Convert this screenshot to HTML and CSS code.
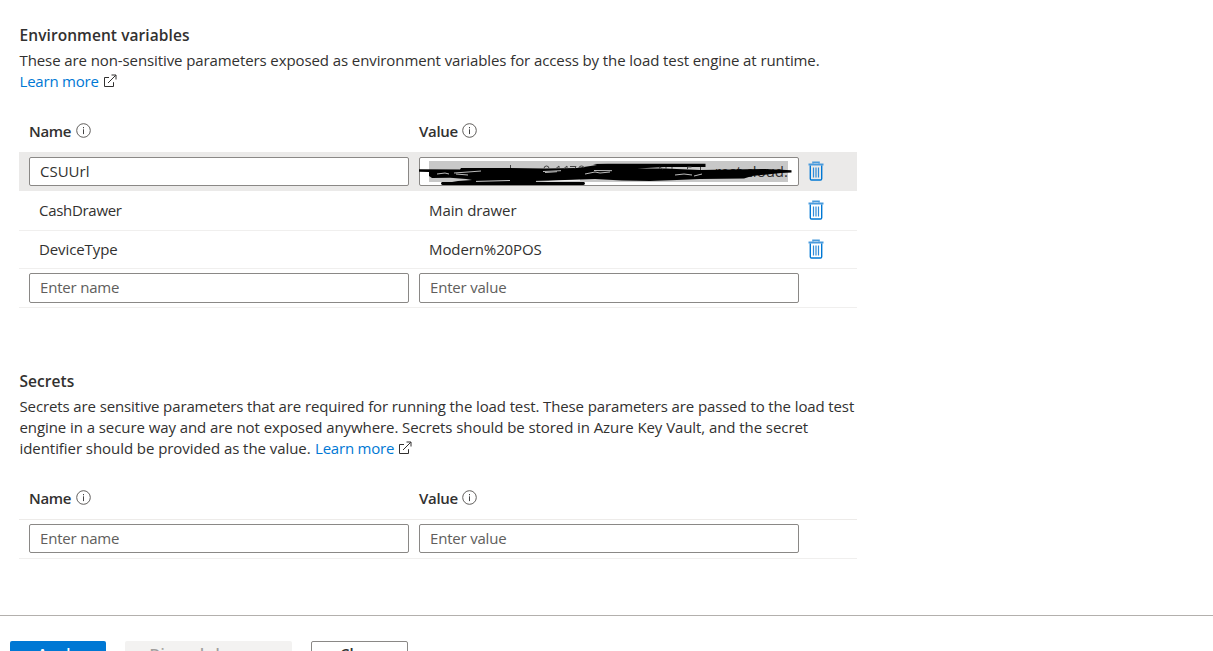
FILE: index.html
```html
<!DOCTYPE html>
<html lang="en">
<head>
<meta charset="utf-8">
<title>Load test parameters</title>
<link rel="stylesheet" href="styles.css">
</head>
<body>
<svg class="defs" width="0" height="0">
  <symbol id="info" viewBox="0 0 15 15"><circle cx="7.5" cy="7.5" r="6.8" fill="none" stroke="#605e5c"/><path d="M7.5 6.3v4.8M7.5 4v1.3" stroke="#444" fill="none"/></symbol>
  <symbol id="open" viewBox="0 0 14 14"><path d="M6 3.5H1.5v9h9V8.2M5 9l7.7-7.7M8.5 1h4.500v4.500" fill="none" stroke="#323130" stroke-width="1"/></symbol>
  <symbol id="trash" viewBox="0 0 16 20"><path d="M5 2.500V1.200h6v1.300" fill="none" stroke="#4a9bdc" stroke-width="1.6"/><path d="M.5 3.500h15" stroke="#4a9bdc" stroke-width="2"/><path d="M2.300 4.500v13.200q0 1.300 1.200 1.300h9q1.200 0 1.200-1.300V4.500" fill="none" stroke="#0078d4" stroke-width="1.4"/><path d="M5.500 6.500v10M8 6.500v10M10.500 6.500v10" stroke="#2f8bd8" stroke-width="1.2"/></symbol>
</svg>
<main class="page">
  <section class="env">
    <h2>Environment variables</h2>
    <p><span class="line l1">These are non-sensitive parameters exposed as environment variables for access by the load test engine at runtime.</span>
    <span class="line"><a class="more">Learn more</a><svg class="open"><use href="#open"/></svg></span></p>
    <div class="head"><div class="col"><b class="hn">Name</b><svg class="info"><use href="#info"/></svg></div><div class="col"><b class="hv">Value</b><svg class="info"><use href="#info"/></svg></div></div>
    <div class="row selected">
      <div class="box"><span class="t-csu">CSUUrl</span></div>
      <div class="box value"><div class="selection"><span>rest cloud.</span></div>
        <svg class="scribble" viewBox="410 145 400 50">
          <path d="M419 169.300L460 169.500L461 168H510L545 168.500L577 168L597 165L593 164L608 163.800H705.500V167L665 167L637 168.500L665 168.500L700 170L730 169.500L765 169L791.500 170.300V172.500L781 173L767 174.500L752 176L744 178.500L700 179L677 180L650 181L622 180.500L595 179L565 180L548 181L535 182H533L440 184L458 181L472 180L466 179L450 177.700L432 178L429 176V172L419 171.800Z"/>
          <path d="M442.500 183.500H583.500" stroke="#000" stroke-width="2.800" stroke-linecap="round"/>
          <path d="M476 181.400L510 180.500M536 181.400L580 180.300" stroke="#fff" stroke-width=".8"/>
          <path d="M437 174l8-1 4 1M454 173l14-1 13-1M456 174l12 1M543 171.500l18-.8M545 172.500l12-.8M585 174l10-2 5 1 10-1M594 170.500l18 .2M675 175l9-1 8 1M694 176l8-2" fill="none" stroke="#bbb" stroke-width="1"/>
          <path d="M510.500 165v3M544 168.500q0-2.500 2.500-2.500t2.500 2.500M556 168.500l3-2.500v2.500M564 168.500l3-2.500v2.500M570 166.500h6l-1 2M579 168q0-2 2.500-2t2.500 2M659.500 169v-2l3 2M666 169v-2M672 169v-2M687.500 169v-2h4M700.500 167v3" fill="none" stroke="#444" stroke-width="1"/>
        </svg>
      </div>
      <svg class="trash"><use href="#trash"/></svg>
    </div>
    <div class="row r2"><div class="cell"><span class="t-cash">CashDrawer</span></div><div class="cell"><span class="t-main">Main drawer</span></div><svg class="trash"><use href="#trash"/></svg></div>
    <div class="row r3"><div class="cell"><span class="t-dev">DeviceType</span></div><div class="cell"><span class="t-pos">Modern%20POS</span></div><svg class="trash"><use href="#trash"/></svg></div>
    <div class="row r4"><div class="box hint"><span>Enter name</span></div><div class="box hint"><span>Enter value</span></div></div>
  </section>
  <section class="secrets">
    <h2 class="sec">Secrets</h2>
    <p><span class="line s1">Secrets are sensitive parameters that are required for running the load test. These parameters are passed to the load test</span>
    <span class="line s2">engine in a secure way and are not exposed anywhere. Secrets should be stored in Azure Key Vault, and the secret</span>
    <span class="line"><span class="s3">identifier should be provided as the value.</span><a class="more gap">Learn more</a><svg class="open"><use href="#open"/></svg></span></p>
    <div class="head head2"><div class="col"><b class="hn">Name</b><svg class="info"><use href="#info"/></svg></div><div class="col"><b class="hv">Value</b><svg class="info"><use href="#info"/></svg></div></div>
    <div class="row r5"><div class="box hint"><span>Enter name</span></div><div class="box hint"><span>Enter value</span></div></div>
  </section>
</main>
<footer><div class="btn apply">Apply</div><div class="btn discard">Discard changes</div><div class="btn close">Close</div></footer>
</body>
</html>
```
FILE: styles.css
```css
* { box-sizing: border-box; }
body { margin: 0; height: 651px; overflow: hidden; background: #fff; color: #323130; font: 15px/21px "Open Sans", "Noto Sans", sans-serif; display: flex; flex-direction: column; }
.defs { position: absolute; }
.page { height: 615px; flex: none; padding: 24px 0 0 19px; width: 857px; }
h2 { margin: 0 0 4px; padding-left: .5px; font-size: 15.5px; line-height: 22px; font-weight: 600; letter-spacing: .07px; }
p { margin: 0; padding-left: .5px; }
.line { display: flex; align-items: center; white-space: nowrap; height: 21px; }
.l1 { letter-spacing: -.097px; }
.s1 { letter-spacing: -.118px; }
.s2 { letter-spacing: -.076px; }
.s3 { letter-spacing: -.06px; width: 290.5px; }
.more { color: #0078d4; width: 79px; letter-spacing: -.2px; }
.gap { margin-left: 5px; }
.open { width: 14px; height: 14px; margin: 0 0 1px 4px; }
.head { display: flex; height: 60px; padding: 29px 0 0 10px; }
.head2 { border-bottom: 1px solid #edebe9; height: 61px; }
.col { width: 390px; display: flex; height: 21px; align-items: center; }
.col b { font-weight: 600; font-size: 15px; letter-spacing: -.3px; }
.hn { width: 43px; }
.hv { width: 39px; }
.info { width: 15px; height: 15px; margin: 0 0 2px 4px; }
.row { display: flex; width: 838px; padding-left: 10px; gap: 10px; align-items: center; border-bottom: 1px solid #f0efee; }
.selected { height: 39px; background: #ebeae9; border: 0; }
.r2 { height: 40px; }
.r3 { height: 38px; }
.r4, .r5 { height: 39px; }
.r5 { align-items: flex-start; padding-top: 4px; }
.cell { width: 380px; padding-left: 10px; white-space: nowrap; letter-spacing: -.1px; }
.t-cash { letter-spacing: -.3px; }
.box { width: 380px; height: 29px; border: 1px solid #8a8886; border-radius: 2px; background: #fff; padding-left: 10px; display: flex; align-items: center; white-space: nowrap; position: relative; }
.r4 .box { height: 30px; }
.hint { color: #605e5c; letter-spacing: -.2px; padding-bottom: 1px; }
.selection { width: 359px; height: 21px; margin-left: -1px; background: #c8c8c8; text-align: right; }
.scribble { position: absolute; left: -10px; top: -13px; width: 400px; height: 50px; }
.trash { width: 16px; height: 20px; margin: 0 0 1px -1.5px; }
.secrets { padding-top: 62px; }
footer { height: 36px; border-top: 1px solid #b3b0ad; display: flex; padding: 25px 0 0 10px; }
.btn { height: 30px; border-radius: 2px; font-weight: 600; text-align: center; line-height: 25px; }
.apply { width: 96px; background: #0078d4; color: #fff; margin-right: 19px; }
.discard { width: 167px; background: #f3f2f1; color: #a19f9d; margin-right: 19px; }
.close { width: 97px; border: 1px solid #8a8886; line-height: 23px; }
```
